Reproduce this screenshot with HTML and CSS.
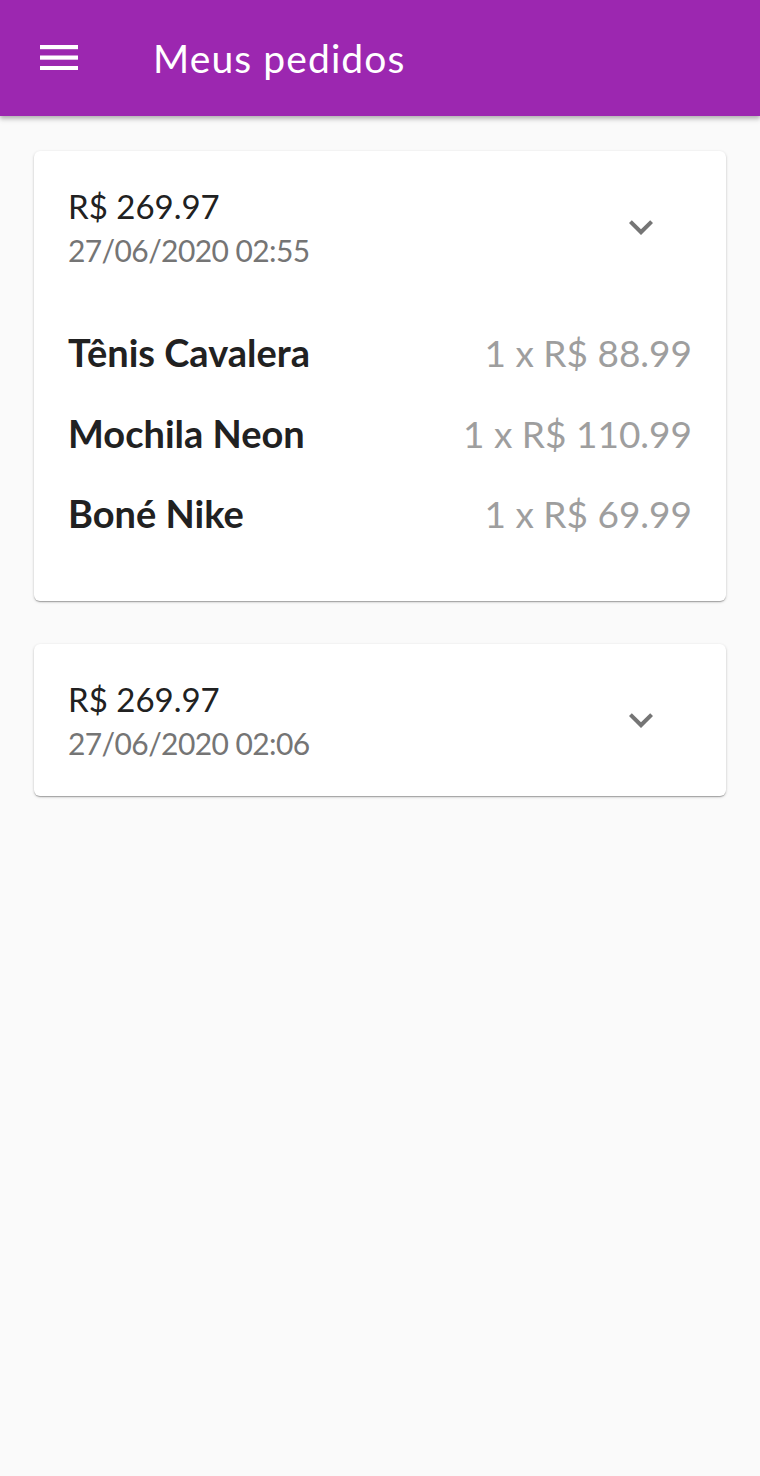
FILE: index.html
```html
<!DOCTYPE html>
<html lang="pt">
<head>
<meta charset="utf-8">
<title>Meus pedidos</title>
<link rel="stylesheet" href="styles.css">
</head>
<body>
<header class="appbar">
  <svg class="menu" width="38" height="25.2" viewBox="0 0 38 25.2" aria-hidden="true">
    <rect x="0" y="0" width="38" height="4.2" fill="#fff"/>
    <rect x="0" y="10.5" width="38" height="4.2" fill="#fff"/>
    <rect x="0" y="21" width="38" height="4.2" fill="#fff"/>
  </svg>
  <h1 class="title">Meus pedidos</h1>
</header>
<main class="content">
  <section class="card">
    <div class="card-head">
      <div class="summary">
        <div class="total">R$ 269.97</div>
        <div class="date">27/06/2020 02:55</div>
      </div>
      <svg class="chevron" width="48" height="48" viewBox="0 0 24 24" aria-hidden="true">
        <path d="M16.59 8.59L12 13.17 7.41 8.59 6 10l6 6 6-6z" fill="#757575"/>
      </svg>
    </div>
    <ul class="items">
      <li class="item"><span class="name">Tênis Cavalera</span><span class="qty">1 x R$ 88.99</span></li>
      <li class="item"><span class="name">Mochila Neon</span><span class="qty">1 x R$ 110.99</span></li>
      <li class="item"><span class="name">Boné Nike</span><span class="qty">1 x R$ 69.99</span></li>
    </ul>
  </section>
  <section class="card">
    <div class="card-head">
      <div class="summary">
        <div class="total">R$ 269.97</div>
        <div class="date">27/06/2020 02:06</div>
      </div>
      <svg class="chevron" width="48" height="48" viewBox="0 0 24 24" aria-hidden="true">
        <path d="M16.59 8.59L12 13.17 7.41 8.59 6 10l6 6 6-6z" fill="#757575"/>
      </svg>
    </div>
  </section>
</main>
</body>
</html>
```
FILE: styles.css
```css
* { box-sizing: border-box; }
html, body {
  margin: 0;
  padding: 0;
  background: #fafafa;
  font-family: Lato, "Noto Sans", sans-serif;
}
.appbar {
  height: 116px;
  background: #9c27b0;
  display: flex;
  align-items: center;
  padding-left: 40px;
  box-shadow: 0 2px 4px rgba(0,0,0,0.2), 0 4px 5px rgba(0,0,0,0.12);
  position: relative;
}
.menu { display: block; margin-top: -1.4px; }
.title {
  margin: 0 0 0 75px;
  color: #fff;
  font-weight: 400;
  font-size: 39px;
  letter-spacing: 1.1px;
  line-height: 1;
}
.content {
  padding: 35px 34px;
  display: flex;
  flex-direction: column;
  gap: 43px;
}
.card {
  background: #fff;
  border-radius: 6px;
  box-shadow: 0 1px 3px rgba(0,0,0,0.2), 0 1px 1px rgba(0,0,0,0.14), 0 2px 1px -1px rgba(0,0,0,0.12);
}
.card-head {
  display: flex;
  align-items: center;
  justify-content: space-between;
  padding: 35px 61px 35px 34px;
}
.total {
  font-size: 33px;
  line-height: 40px;
  color: #212121;
}
.date {
  margin-top: 6px;
  font-size: 30px;
  line-height: 36px;
  letter-spacing: -0.6px;
  color: #757575;
}
.chevron { display: block; }
.items {
  list-style: none;
  margin: 0;
  padding: 9px 34px 47px;
}
.item {
  display: flex;
  justify-content: space-between;
  align-items: baseline;
  height: 80.5px;
  line-height: 80.5px;
}
.name {
  font-size: 38px;
  font-weight: 700;
  color: #212121;
}
.qty {
  font-size: 37px;
  color: #9e9e9e;
}
```
